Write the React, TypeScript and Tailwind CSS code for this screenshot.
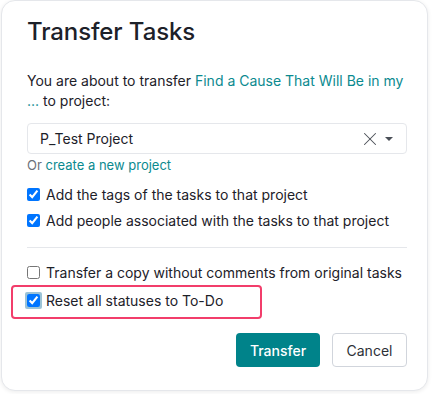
import { X } from "lucide-react";

function Check({ checked, focused }: { checked: boolean; focused?: boolean }) {
  return (
    <span
      className={
        focused
          ? "-mx-[2px] flex h-[17px] w-[17px] items-center justify-center rounded-[2px] bg-[#9cc3d6]"
          : "flex h-[13px] w-[13px] items-center justify-center"
      }
    >
      <input
        type="checkbox"
        defaultChecked={checked}
        className="m-0 h-[13px] w-[13px] accent-[#0075ff]"
      />
    </span>
  );
}

export default function App() {
  return (
    <div className="relative h-[394px] w-[437px] overflow-hidden bg-white font-['Inter',sans-serif]">
      <div className="ml-px flex h-[391px] w-[427px] flex-col rounded-[14px] border border-gray-200 bg-white pl-[25px] pr-[20px] pt-[16px] shadow-[0_1px_4px_rgba(0,0,0,0.08)]">
        <h1 className="text-[24px] leading-[30px] font-medium tracking-[-0.1px] text-[#1d2129]">
          Transfer Tasks
        </h1>

        <p className="mt-[24px] text-[14px] leading-[20px] text-[#1d2129]">
          You are about to transfer{" "}
          <span className="text-[#0b8a8f]">Find a Cause That Will Be in my ...</span>{" "}
          to project:
        </p>

        <div className="mt-[12px] flex h-[31px] items-center rounded-[4px] border border-gray-200 pl-[12px] pr-[13px]">
          <span className="flex-1 text-[14px] text-[#1d2129]">P_Test Project</span>
          <X className="h-[22px] w-[22px] text-[#4a4f57]" strokeWidth={1.1} />
          <svg viewBox="0 0 10 5" className="ml-[4px] h-[4px] w-[8px] fill-[#4a4f57]">
            <path d="M0 0h10L5 5z" />
          </svg>
        </div>

        <p className="mt-[2px] text-[13px] leading-[18px] text-[#6b7079]">
          Or <span className="text-[#0b8a8f]">create a new project</span>
        </p>

        <div className="mt-[11px] flex flex-col gap-[7px] text-[14px] leading-[19px] text-[#1d2129]">
          <label className="flex items-center gap-[6px]">
            <Check checked />
            Add the tags of the tasks to that project
          </label>
          <label className="flex items-center gap-[6px]">
            <Check checked />
            Add people associated with the tasks to that project
          </label>
        </div>

        <div className="mt-[17px] h-px bg-gray-200" />

        <div className="mt-[15px] flex flex-col text-[14px] leading-[19px] text-[#1d2129]">
          <label className="flex items-center gap-[6px]">
            <Check checked={false} />
            Transfer a copy without comments from original tasks
          </label>
          <div className="-ml-[16px] mt-[3px] flex h-[34px] w-[251px] items-center rounded-[4px] border-2 border-[#f23d6b] pb-[3px] pl-[14px]">
            <label className="flex items-center gap-[6px]">
              <Check checked focused />
              Reset all statuses to To-Do
            </label>
          </div>
        </div>

        <div className="mt-[14px] flex justify-end gap-[12px]">
          <button className="h-[34px] w-[84px] rounded-[4px] bg-[#00838a] text-[14px] font-medium text-white">
            Transfer
          </button>
          <button className="h-[34px] w-[75px] rounded-[4px] border border-gray-300 bg-white text-[14px] text-[#2d3138]">
            Cancel
          </button>
        </div>
      </div>
    </div>
  );
}
